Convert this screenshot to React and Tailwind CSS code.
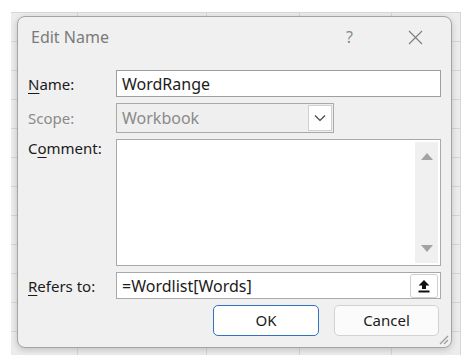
import { useState } from 'react'

const FONT = { fontFamily: '"Noto Sans", "Open Sans", sans-serif' }

// widths of the sheet's columns behind the dialog
const COLS = [67, 129, 93, 92, 69]

function Sheet() {
  return (
    <div className="ml-[11px] mt-[12px] flex h-[343px] w-[450px] border-t border-[#d6d6d6] bg-[#ececec] bg-[linear-gradient(to_bottom,#d6d6d6_1px,transparent_1px)] bg-[length:100%_29px] bg-[position:0_28px]">
      {COLS.map((w, i) => (
        <div key={i} className="h-full shrink-0 border-r border-[#d6d6d6]" style={{ width: w }} />
      ))}
    </div>
  )
}

function Label({ pre = '', u, rest, muted = false }) {
  return (
    <span className={`text-[15px] ${muted ? 'text-[#8a8a8a]' : 'text-[#1b1b1b]'}`}>
      {pre}
      {u && <span className="underline decoration-1 underline-offset-[3px]">{u}</span>}
      {rest}
    </span>
  )
}

function Row({ label, children, top = false }) {
  return (
    <div className={`flex ${top ? 'items-start' : 'items-center'}`}>
      <div className={`w-[88px] shrink-0 leading-5 ${top ? '-mt-[1px]' : ''}`}>{label}</div>
      {children}
    </div>
  )
}

function Chevron() {
  return (
    <svg width="12" height="8" viewBox="0 0 12 8" fill="none">
      <path d="M1 1.5 L6 6.5 L11 1.5" stroke="#444" strokeWidth="1.2" />
    </svg>
  )
}

function UploadIcon() {
  return (
    <svg width="14" height="14" viewBox="0 0 14 14">
      <path d="M7 1 L12.5 6.5 L9 6.5 L9 10 L5 10 L5 6.5 L1.5 6.5 Z" fill="#111" />
      <rect x="1.5" y="11.5" width="11" height="2" fill="#111" />
    </svg>
  )
}

function Grip() {
  return (
    <svg width="12" height="12" viewBox="0 0 12 12" className="absolute bottom-[2px] right-[2px]">
      <path d="M11 3 L3 11 M11 7 L7 11" stroke="#9a9a9a" strokeWidth="1.2" />
    </svg>
  )
}

export default function App() {
  const [name, setName] = useState('WordRange')
  const [refers, setRefers] = useState('=Wordlist[Words]')
  const [comment, setComment] = useState('')

  return (
    <div className="relative h-[363px] w-[472px] overflow-hidden bg-white" style={FONT}>
      <Sheet />

      <div className="absolute left-[17px] top-[16px] flex h-[332px] w-[435px] flex-col rounded-[8px] border border-[#a4a4a4] bg-[#f0f0f0] shadow-[0_2px_6px_rgba(0,0,0,0.18)]">
        <div className="flex h-[40px] items-center pl-[13px] pr-[28px]">
          <span className="text-[16px] text-[#7b7b7b]">Edit Name</span>
          <span className="ml-auto text-[16px] text-[#8a8a8a]">?</span>
          <svg width="15" height="15" viewBox="0 0 15 15" className="ml-[55px]">
            <path d="M1 1 L14 14 M14 1 L1 14" stroke="#7d7d7d" strokeWidth="1.1" />
          </svg>
        </div>

        <div className="flex flex-col gap-[6px] pl-[10px] pr-[10px] pt-[13px]">
          <Row label={<Label u="N" rest="ame:" />}>
            <input
              value={name}
              onChange={(e) => setName(e.target.value)}
              className="h-[27px] w-[326px] border border-[#9e9e9e] bg-white px-[5px] text-[16px] text-[#1b1b1b] outline-none"
            />
          </Row>

          <Row label={<Label rest="Scope:" muted />}>
            <div className="flex h-[30px] w-[218px] items-center border border-[#a9a9a9] bg-[#efefef] pl-[5px] pr-[1px]">
              <span className="text-[16px] text-[#8a8a8a]">Workbook</span>
              <div className="ml-auto flex h-[26px] w-[24px] items-center justify-center border border-[#d0d0d0] bg-white">
                <Chevron />
              </div>
            </div>
          </Row>

          <Row label={<Label pre="C" u="o" rest="mment:" />} top>
            <div className="flex h-[127px] w-[326px] border border-[#a9a9a9] bg-white">
              <textarea
                value={comment}
                onChange={(e) => setComment(e.target.value)}
                className="flex-1 resize-none bg-transparent outline-none"
              />
              <div className="my-[2px] mr-[2px] flex w-[23px] flex-col items-center justify-between bg-[#f0f0f0] py-[11px]">
                <div className="h-0 w-0 border-x-[6px] border-b-[7px] border-x-transparent border-b-[#a3a3a3]" />
                <div className="h-0 w-0 border-x-[6px] border-t-[7px] border-x-transparent border-t-[#a3a3a3]" />
              </div>
            </div>
          </Row>

          <Row label={<Label u="R" rest="efers to:" />}>
            <div className="flex h-[27px] w-[326px] items-center border border-[#a9a9a9] bg-white pr-[2px]">
              <input
                value={refers}
                onChange={(e) => setRefers(e.target.value)}
                className="min-w-0 flex-1 bg-transparent px-[5px] text-[16px] text-[#1b1b1b] outline-none"
              />
              <button className="flex h-[24px] w-[28px] items-center justify-center rounded-[3px] border border-[#cfcfcf] bg-white">
                <UploadIcon />
              </button>
            </div>
          </Row>

          <div className="flex justify-end gap-[15px] pr-[2px]">
            <button className="h-[31px] w-[106px] rounded-[5px] border-[1.5px] border-[#2f73c2] bg-white text-[15px] text-[#1b1b1b]">
              OK
            </button>
            <button className="h-[31px] w-[105px] rounded-[5px] border border-[#d2d2d2] bg-[#fbfbfb] text-[15px] text-[#1b1b1b]">
              Cancel
            </button>
          </div>
        </div>

        <Grip />
      </div>
    </div>
  )
}
